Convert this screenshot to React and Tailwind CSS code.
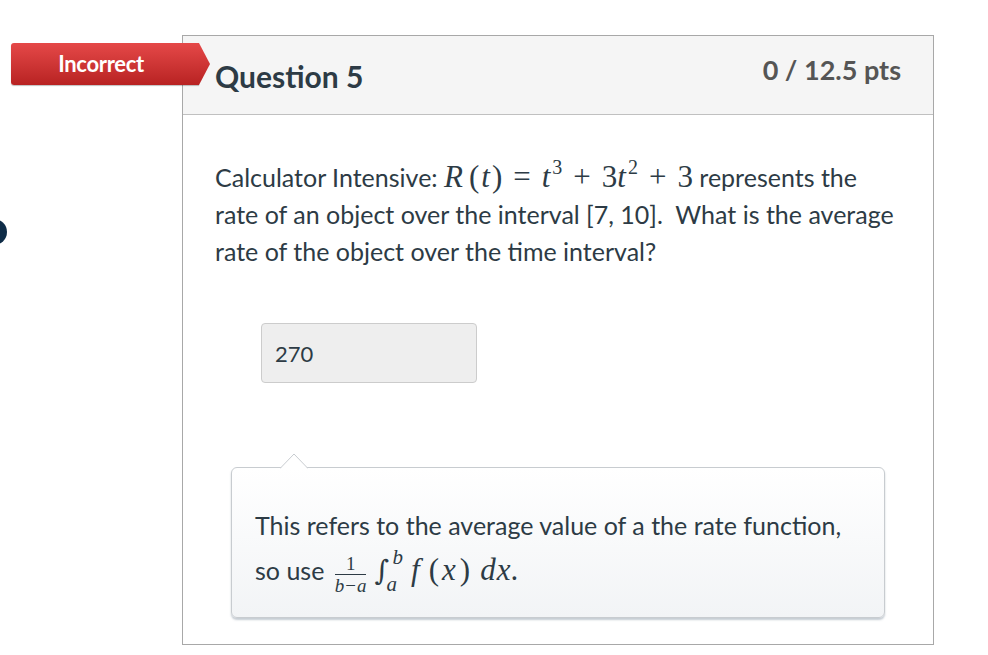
const M = ({ children, className = '' }) => (
  <span className={`font-['Liberation_Serif','Times_New_Roman',serif] ${className}`}>{children}</span>
);

const Op = ({ children }) => <span className="mx-[11px] not-italic">{children}</span>;

const Sup = ({ children }) => (
  <span className="relative top-[-13px] text-[20px] leading-none ml-[2px] not-italic">{children}</span>
);

const App = () => {
  return (
    <div className="relative w-[988px] h-[655px] bg-white overflow-hidden font-['Lato','Noto_Sans',sans-serif] text-[#2d3b45]">
      {/* left edge nav dot */}
      <div className="absolute left-[-19px] top-[219px] w-[26px] h-[26px] rounded-full bg-[#0e2c47]"></div>

      <div className="pl-[182px] pt-[35px]">
        <div className="relative w-[752px] h-[610px] border border-[#a8a8a8] flex flex-col">
          {/* Incorrect badge */}
          <div className="absolute left-[-172px] top-[7px] flex items-center">
            <div className="w-[188px] h-[42px] rounded-l-[3px] bg-gradient-to-b from-[#e54848] to-[#b82222] flex items-center justify-center text-white font-bold text-[22px] tracking-[-0.3px] pb-[2px] pr-[8px] shadow-[0_1px_1px_rgba(0,0,0,0.25)]">
              Incorrect
            </div>
            <svg width="11" height="42" viewBox="0 0 11 42" className="block">
              <defs>
                <linearGradient id="bg" x1="0" y1="0" x2="0" y2="1">
                  <stop offset="0" stopColor="#e54848" />
                  <stop offset="1" stopColor="#b82222" />
                </linearGradient>
              </defs>
              <path d="M0 0 L0 42 L11 21 Z" fill="url(#bg)" />
            </svg>
          </div>

          {/* Header */}
          <div className="h-[79px] bg-[#f5f5f5] border-b border-[#c0c0c0] flex items-start justify-between pl-[32px] pr-[32px]">
            <h2 className="mt-[22px] text-[30px] font-bold text-[#2d3b45] leading-[36px]">Question 5</h2>
            <div className="mt-[17px] text-[27px] font-bold text-[#555555] leading-[34px]">0 / 12.5 pts</div>
          </div>

          {/* Body */}
          <div className="pl-[32px] pr-[34px] pt-[44px]">
            <p className="text-[25px] leading-[37px] text-[#2d3b45]">
              Calculator Intensive:{' '}
              <M className="text-[31px] italic leading-[20px]">
                R<span className="not-italic ml-[6px] mr-[2px]">(</span>t<span className="not-italic ml-[2px]">)</span>
                <Op>=</Op>t<Sup>3</Sup>
                <Op>+</Op>
                <span className="not-italic">3</span>t<Sup>2</Sup>
                <Op>+</Op>
                <span className="not-italic">3</span>
              </M>{' '}
              represents the rate of an object over the interval [7, 10].&nbsp; What is the average rate of the object over the time interval?
            </p>

            <div className="mt-[53px] ml-[46px] w-[216px] h-[60px] bg-[#eeeeee] border border-[#cccccc] rounded-[4px] flex items-center pl-[13px] text-[22px] text-[#2d3b45]">
              270
            </div>

            {/* Feedback comment */}
            <div className="relative mt-[84px] ml-[16px] w-[654px] h-[151px] rounded-[6px] border border-[#c8ccd0] bg-gradient-to-b from-white to-[#f2f4f6] shadow-[0_2px_2px_rgba(90,110,130,0.35)] pl-[23px] pt-[40px]">
              <svg width="28" height="16" viewBox="0 0 28 16" className="absolute left-[48px] top-[-15px]">
                <path d="M0 15.5 L14 1 L28 15.5" fill="#ffffff" stroke="#c8ccd0" strokeWidth="1" />
              </svg>
              <p className="text-[25px] leading-[34px] text-[#2d3b45]">
                This refers to the average value of a the rate function,
              </p>
              <div className="mt-[3px] flex items-center text-[25px] leading-[34px]">
                <span>so use&nbsp;</span>
                <M className="flex items-center text-[31px] italic">
                  <span className="inline-flex flex-col items-center text-[19px] leading-[17px] mt-[10px] ml-[4px]">
                    <span className="px-[8px] not-italic">1</span>
                    <span className="w-full h-[1px] bg-[#2d3b45] my-[2px]"></span>
                    <span>b<span className="not-italic mx-[1px]">−</span>a</span>
                  </span>
                  <span className="relative ml-[8px] mr-[22px] inline-block h-[34px]">
                    <span className="font-['DejaVu_Serif',serif] text-[28px] leading-[34px] not-italic">∫</span>
                    <span className="absolute left-[18px] top-[-6px] text-[21px] leading-none">b</span>
                    <span className="absolute left-[12px] bottom-[-8px] text-[21px] leading-none">a</span>
                  </span>
                  f<span className="not-italic ml-[9px] mr-[3px]">(</span>x<span className="not-italic ml-[4px]">)</span>
                  <span className="ml-[10px]">d<span className="ml-[1px]">x</span></span>
                  <span className="not-italic">.</span>
                </M>
              </div>
            </div>
          </div>
        </div>
      </div>
    </div>
  );
};

export default App;
